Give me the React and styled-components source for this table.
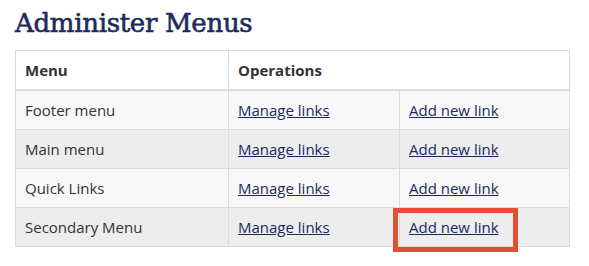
import styled, { createGlobalStyle } from 'styled-components';

const GlobalStyle = createGlobalStyle`
  body {
    margin: 0;
    background: #fff;
    font-family: 'Open Sans', 'Liberation Sans', sans-serif;
  }
`;

const Page = styled.div`
  padding: 7px 15px 20px 15px;
  width: 554px;
`;

const Title = styled.h1`
  margin: 0 0 10px 0;
  font-family: 'DejaVu Serif', serif;
  font-weight: normal;
  font-size: 26px;
  line-height: 33px;
  letter-spacing: -0.3px;
  -webkit-text-stroke: 0.6px #1d2b5b;
  color: #1d2b5b;
`;

const Table = styled.table`
  width: 554px;
  border-collapse: collapse;
  table-layout: fixed;
  font-size: 15px;
  color: #333;
`;

const Head = styled.th`
  text-align: left;
  font-weight: bold;
  padding: 10px 9px;
  line-height: 18px;
  background: #fff;
  border: 1px solid #dcdcdc;
  border-bottom: 2px solid #dcdcdc;
`;

const Row = styled.tr`
  background: ${(p) => (p.$even ? '#ededed' : '#f8f8f8')};
`;

const Cell = styled.td`
  padding: 10px 9px;
  line-height: 18px;
  border: 1px solid #dcdcdc;
`;

const Link = styled.a`
  position: relative;
  display: inline-block;
  color: #1a2a5e;
  text-decoration: underline;
  cursor: pointer;

  /* red outline around the highlighted link */
  ${(p) =>
    p.$marked &&
    `
    &::before {
      content: '';
      position: absolute;
      left: -16px;
      top: -10px;
      width: 125px;
      height: 44px;
      box-sizing: border-box;
      border: 5px solid #e04e35;
    }
  `}
`;

const menus = ['Footer menu', 'Main menu', 'Quick Links', 'Secondary Menu'];

function App() {
  return (
    <Page>
      <GlobalStyle />
      <Title>Administer Menus</Title>
      <Table>
        <colgroup>
          <col style={{ width: '213px' }} />
          <col style={{ width: '171px' }} />
          <col style={{ width: '170px' }} />
        </colgroup>
        <thead>
          <tr>
            <Head>Menu</Head>
            <Head colSpan={2}>Operations</Head>
          </tr>
        </thead>
        <tbody>
          {menus.map((name, i) => (
            <Row key={name} $even={i % 2 === 1}>
              <Cell>{name}</Cell>
              <Cell>
                <Link>Manage links</Link>
              </Cell>
              <Cell>
                <Link $marked={i === menus.length - 1}>Add new link</Link>
              </Cell>
            </Row>
          ))}
        </tbody>
      </Table>
    </Page>
  );
}

export default App;
